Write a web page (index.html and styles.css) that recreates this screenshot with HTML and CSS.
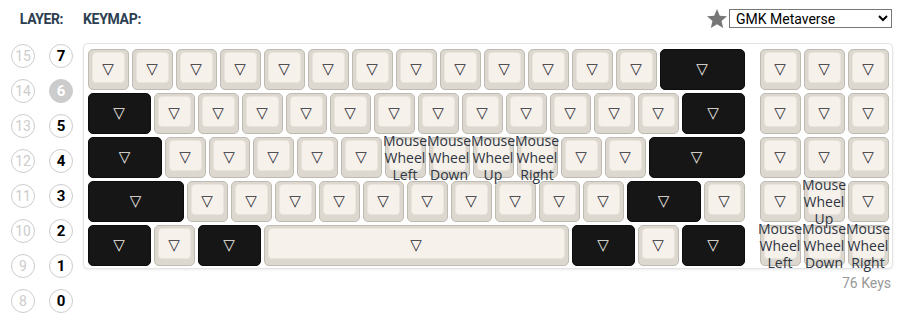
FILE: index.html
```html
<!DOCTYPE html>
<html>
<head>
<meta charset="utf-8">
<link rel="stylesheet" href="styles.css">
</head>
<body>
<div class="header">
  <div class="layer-title">LAYER:</div>
  <div class="keymap-title">KEYMAP:</div>
  <div class="spacer"></div>
  <svg class="star" viewBox="0 0 24 24"><path d="M12 17.27L18.18 21l-1.64-7.03L22 9.24l-7.19-.61L12 2 9.19 8.63 2 9.24l5.46 4.73L5.82 21z"/></svg>
  <select class="theme"><option>GMK Metaverse</option></select>
</div>
<div class="content">
  <div class="layers">
    <div class="layer off">15</div><div class="layer on">7</div>
    <div class="layer off">14</div><div class="layer active">6</div>
    <div class="layer off">13</div><div class="layer on">5</div>
    <div class="layer off">12</div><div class="layer on">4</div>
    <div class="layer off">11</div><div class="layer on">3</div>
    <div class="layer off">10</div><div class="layer on">2</div>
    <div class="layer off">9</div><div class="layer on">1</div>
    <div class="layer off">8</div><div class="layer on">0</div>
  </div>
  <div class="kb-col">
    <div class="keyboard">
      <div class="block">
        <div class="row">
          <div class="key light u1"><span class="lg">▽</span></div>
          <div class="key light u1"><span class="lg">▽</span></div>
          <div class="key light u1"><span class="lg">▽</span></div>
          <div class="key light u1"><span class="lg">▽</span></div>
          <div class="key light u1"><span class="lg">▽</span></div>
          <div class="key light u1"><span class="lg">▽</span></div>
          <div class="key light u1"><span class="lg">▽</span></div>
          <div class="key light u1"><span class="lg">▽</span></div>
          <div class="key light u1"><span class="lg">▽</span></div>
          <div class="key light u1"><span class="lg">▽</span></div>
          <div class="key light u1"><span class="lg">▽</span></div>
          <div class="key light u1"><span class="lg">▽</span></div>
          <div class="key light u1"><span class="lg">▽</span></div>
          <div class="key dark u2"><span class="lg">▽</span></div>
        </div>
        <div class="row">
          <div class="key dark u15"><span class="lg">▽</span></div>
          <div class="key light u1"><span class="lg">▽</span></div>
          <div class="key light u1"><span class="lg">▽</span></div>
          <div class="key light u1"><span class="lg">▽</span></div>
          <div class="key light u1"><span class="lg">▽</span></div>
          <div class="key light u1"><span class="lg">▽</span></div>
          <div class="key light u1"><span class="lg">▽</span></div>
          <div class="key light u1"><span class="lg">▽</span></div>
          <div class="key light u1"><span class="lg">▽</span></div>
          <div class="key light u1"><span class="lg">▽</span></div>
          <div class="key light u1"><span class="lg">▽</span></div>
          <div class="key light u1"><span class="lg">▽</span></div>
          <div class="key light u1"><span class="lg">▽</span></div>
          <div class="key dark u15"><span class="lg">▽</span></div>
        </div>
        <div class="row">
          <div class="key dark u175"><span class="lg">▽</span></div>
          <div class="key light u1"><span class="lg">▽</span></div>
          <div class="key light u1"><span class="lg">▽</span></div>
          <div class="key light u1"><span class="lg">▽</span></div>
          <div class="key light u1"><span class="lg">▽</span></div>
          <div class="key light u1"><span class="lg">▽</span></div>
          <div class="key light u1"><span class="lbl">Mouse Wheel Left</span></div>
          <div class="key light u1"><span class="lbl">Mouse Wheel Down</span></div>
          <div class="key light u1"><span class="lbl">Mouse Wheel Up</span></div>
          <div class="key light u1"><span class="lbl">Mouse Wheel Right</span></div>
          <div class="key light u1"><span class="lg">▽</span></div>
          <div class="key light u1"><span class="lg">▽</span></div>
          <div class="key dark u225"><span class="lg">▽</span></div>
        </div>
        <div class="row">
          <div class="key dark u225"><span class="lg">▽</span></div>
          <div class="key light u1"><span class="lg">▽</span></div>
          <div class="key light u1"><span class="lg">▽</span></div>
          <div class="key light u1"><span class="lg">▽</span></div>
          <div class="key light u1"><span class="lg">▽</span></div>
          <div class="key light u1"><span class="lg">▽</span></div>
          <div class="key light u1"><span class="lg">▽</span></div>
          <div class="key light u1"><span class="lg">▽</span></div>
          <div class="key light u1"><span class="lg">▽</span></div>
          <div class="key light u1"><span class="lg">▽</span></div>
          <div class="key light u1"><span class="lg">▽</span></div>
          <div class="key dark u175"><span class="lg">▽</span></div>
          <div class="key light u1"><span class="lg">▽</span></div>
        </div>
        <div class="row">
          <div class="key dark u15"><span class="lg">▽</span></div>
          <div class="key light u1"><span class="lg">▽</span></div>
          <div class="key dark u15"><span class="lg">▽</span></div>
          <div class="key light u7"><span class="lg">▽</span></div>
          <div class="key dark u15"><span class="lg">▽</span></div>
          <div class="key light u1"><span class="lg">▽</span></div>
          <div class="key dark u15"><span class="lg">▽</span></div>
        </div>
      </div>
      <div class="block">
        <div class="row">
          <div class="key light u1"><span class="lg">▽</span></div>
          <div class="key light u1"><span class="lg">▽</span></div>
          <div class="key light u1"><span class="lg">▽</span></div>
        </div>
        <div class="row">
          <div class="key light u1"><span class="lg">▽</span></div>
          <div class="key light u1"><span class="lg">▽</span></div>
          <div class="key light u1"><span class="lg">▽</span></div>
        </div>
        <div class="row">
          <div class="key light u1"><span class="lg">▽</span></div>
          <div class="key light u1"><span class="lg">▽</span></div>
          <div class="key light u1"><span class="lg">▽</span></div>
        </div>
        <div class="row">
          <div class="key light u1"><span class="lg">▽</span></div>
          <div class="key light u1"><span class="lbl">Mouse Wheel Up</span></div>
          <div class="key light u1"><span class="lg">▽</span></div>
        </div>
        <div class="row">
          <div class="key light u1"><span class="lbl">Mouse Wheel Left</span></div>
          <div class="key light u1"><span class="lbl">Mouse Wheel Down</span></div>
          <div class="key light u1"><span class="lbl">Mouse Wheel Right</span></div>
        </div>
      </div>
    </div>
    <div class="count">76 Keys</div>
  </div>
</div>
</body>
</html>
```
FILE: styles.css
```css
* { box-sizing: border-box; }
html, body { margin: 0; padding: 0; background: #fff; }
body {
  width: 911px;
  height: 322px;
  overflow: hidden;
  font-family: Roboto, "Liberation Sans", sans-serif;
  color: #2c3e50;
}
.header {
  display: flex;
  align-items: center;
  height: 19px;
  margin-top: 9px;
  padding-right: 19px;
}
.layer-title {
  width: 83px;
  text-align: center;
  font-weight: 700;
  font-size: 14px;
  letter-spacing: -0.4px;
}
.keymap-title {
  font-weight: 700;
  font-size: 14px;
  letter-spacing: -0.3px;
}
.spacer { flex: 1; }
.star { width: 24px; height: 24px; fill: #777; }
.theme {
  width: 163px;
  height: 19px;
  font-family: Roboto, "Liberation Sans", sans-serif;
  font-size: 14px;
  color: #000;
  background: #fff;
  border: 1px solid #767676;
  border-radius: 0;
  padding: 0 0 0 2px;
  margin: 0;
}
.content {
  display: flex;
  align-items: flex-start;
  margin-top: 15px;
}
.layers {
  display: grid;
  grid-template-columns: 24px 24px;
  column-gap: 14px;
  row-gap: 11px;
  margin-left: 11px;
  margin-top: 1px;
}
.layer {
  width: 24px;
  height: 24px;
  border-radius: 50%;
  border: 1px solid #ccc;
  display: flex;
  align-items: center;
  justify-content: center;
  font-size: 14px;
}
.layer.off { color: #ccc; }
.layer.on { color: #000; font-weight: 700; font-size: 15px; }
.layer.active { background: #ccc; color: #fff; font-weight: 700; font-size: 15px; }
.kb-col {
  margin-left: 10px;
  display: flex;
  flex-direction: column;
  align-items: flex-end;
}
.keyboard {
  display: flex;
  gap: 12px;
  padding: 3px 2px 1px 2px;
  border: 1px solid #e4e4e4;
  border-radius: 5px;
  background: #fff;
  box-shadow: 0 1px 3px rgba(0, 0, 0, 0.08);
}
.block { display: flex; flex-direction: column; }
.row { display: flex; }
.key {
  position: relative;
  margin: 1.5px;
  height: 41px;
  border-radius: 5px;
  display: flex;
  align-items: center;
  justify-content: center;
}
.u1 { width: 41px; }
.u15 { width: 63px; }
.u175 { width: 74px; }
.u2 { width: 85px; }
.u225 { width: 96px; }
.u7 { width: 305px; }
.light {
  background: #dcd8cf;
  border: 1px solid #bfbbb3;
}
.light::before {
  content: "";
  position: absolute;
  top: 2px;
  left: 3px;
  right: 3px;
  bottom: 6px;
  border-radius: 4px;
  background: #f6f2eb;
  border: 1px solid #e9e5dd;
  z-index: 0;
}
.dark {
  background: #161616;
  border: 1px solid #0c0c0c;
}
.lg {
  position: relative;
  z-index: 1;
  font-family: "DejaVu Sans", sans-serif;
  font-size: 15px;
  line-height: 1;
}
.light .lg { color: #2a2a33; }
.dark .lg { color: #f2eee6; }
.lbl {
  position: relative;
  z-index: 2;
  width: min-content;
  text-align: center;
  font-family: "Open Sans", sans-serif;
  font-size: 14px;
  line-height: 17px;
  color: #2f3542;
  flex-shrink: 0;
}
.count {
  margin-top: 6px;
  margin-right: 2px;
  color: #999;
  font-size: 14px;
  line-height: 16px;
}
```
